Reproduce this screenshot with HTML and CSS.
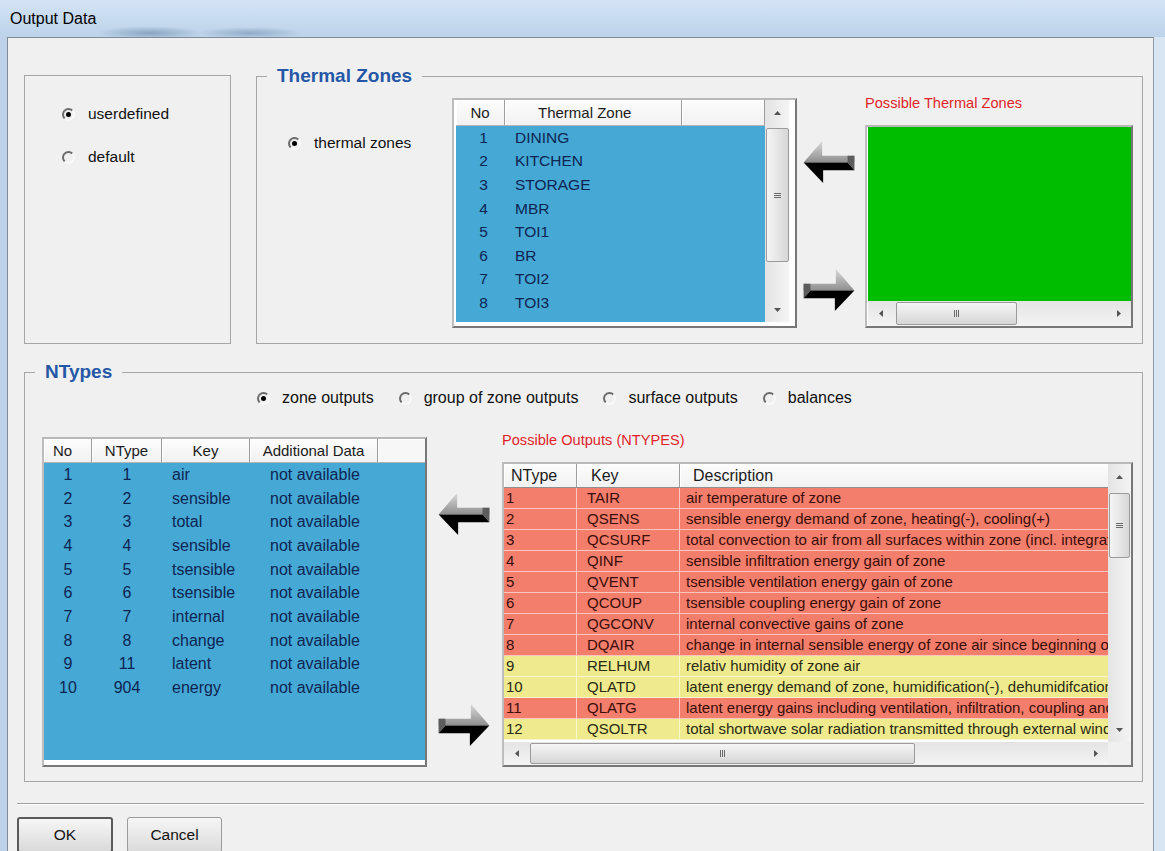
FILE: index.html
```html
<!DOCTYPE html>
<html lang="en">
<head>
<meta charset="utf-8">
<title>Output Data</title>
<link rel="stylesheet" href="styles.css">
</head>
<body>
<svg class="defs" aria-hidden="true">
  <defs>
    <linearGradient id="arrowFace" x1="0" y1="0" x2="0" y2="1">
      <stop offset="0" stop-color="#dadada"/>
      <stop offset="1" stop-color="#8e8e8e"/>
    </linearGradient>
    <symbol id="arrow-left" viewBox="0 0 52 44">
      <polygon points="0,23 19,1 19,16 52,16 52,23" fill="url(#arrowFace)"/>
      <polygon points="45,16 52,16 52,31 45,23" fill="#5c5c5c"/>
      <polygon points="0,23 45,23 52,31 20,31 20,44" fill="#000"/>
    </symbol>
    <symbol id="tri-up" viewBox="0 0 7 4"><polygon points="0,4 3.5,0 7,4"/></symbol>
    <symbol id="tri-down" viewBox="0 0 7 4"><polygon points="0,0 7,0 3.5,4"/></symbol>
    <symbol id="tri-left" viewBox="0 0 4 7"><polygon points="4,0 4,7 0,3.5"/></symbol>
    <symbol id="tri-right" viewBox="0 0 4 7"><polygon points="0,0 4,3.5 0,7"/></symbol>
  </defs>
</svg>

<div class="window">
  <div class="titlebar">Output Data</div>

  <div class="client">
    <div class="top-row">
      <fieldset class="group mode-group">
        <div class="radio-item"><span class="radio on"></span>userdefined</div>
        <div class="radio-item"><span class="radio"></span>default</div>
      </fieldset>

      <fieldset class="group zones-group">
        <legend>Thermal Zones</legend>
        <div class="zones-body">
          <div class="radio-item zones-radio"><span class="radio on"></span>thermal zones</div>

          <div class="frame zone-list">
            <div class="list-main">
              <div class="list-head zone-cols">
                <span class="hcell hc-center">No</span>
                <span class="hcell hc-zone">Thermal Zone</span>
                <span class="hcell"></span>
              </div>
              <div class="list-body blue zone-body">
                <div class="zone-row zone-cols"><span class="num">1</span><span class="txt">DINING</span></div>
                <div class="zone-row zone-cols"><span class="num">2</span><span class="txt">KITCHEN</span></div>
                <div class="zone-row zone-cols"><span class="num">3</span><span class="txt">STORAGE</span></div>
                <div class="zone-row zone-cols"><span class="num">4</span><span class="txt">MBR</span></div>
                <div class="zone-row zone-cols"><span class="num">5</span><span class="txt">TOI1</span></div>
                <div class="zone-row zone-cols"><span class="num">6</span><span class="txt">BR</span></div>
                <div class="zone-row zone-cols"><span class="num">7</span><span class="txt">TOI2</span></div>
                <div class="zone-row zone-cols"><span class="num">8</span><span class="txt">TOI3</span></div>
                <div class="zone-row zone-cols"><span class="num">9</span><span class="txt">STAIR</span></div>
              </div>
            </div>
            <div class="vscroll zone-vscroll">
              <div class="sb-btn"><svg class="tri-v"><use href="#tri-up"/></svg></div>
              <div class="thumb-v zone-thumb"><span class="grip-v"></span></div>
              <div class="sb-track"></div>
              <div class="sb-btn"><svg class="tri-v"><use href="#tri-down"/></svg></div>
            </div>
          </div>

          <div class="arrows zone-arrows">
            <svg class="arrow"><use href="#arrow-left"/></svg>
            <svg class="arrow flip"><use href="#arrow-left"/></svg>
          </div>

          <div class="possible zone-possible">
            <div class="caption">Possible Thermal Zones</div>
            <div class="frame green-list">
              <div class="green-fill"></div>
              <div class="hscroll">
                <div class="sb-btn-h"><svg class="tri-h"><use href="#tri-left"/></svg></div>
                <div class="thumb-h green-thumb"><span class="grip-h"></span></div>
                <div class="sb-track"></div>
                <div class="sb-btn-h"><svg class="tri-h"><use href="#tri-right"/></svg></div>
              </div>
            </div>
          </div>
        </div>
      </fieldset>
    </div>

    <fieldset class="group ntypes-group">
      <legend>NTypes</legend>
      <div class="type-radios">
        <div class="radio-item"><span class="radio on"></span>zone outputs</div>
        <div class="radio-item"><span class="radio"></span>group of zone outputs</div>
        <div class="radio-item"><span class="radio"></span>surface outputs</div>
        <div class="radio-item"><span class="radio"></span>balances</div>
      </div>

      <div class="ntypes-body">
        <div class="frame selected-list">
          <div class="list-head sel-cols">
            <span class="hcell hc-no">No</span>
            <span class="hcell hc-center">NType</span>
            <span class="hcell hc-center">Key</span>
            <span class="hcell hc-center">Additional Data</span>
            <span class="hcell hc-fill"></span>
          </div>
          <div class="list-body blue sel-body">
            <div class="sel-row sel-cols"><span class="c">1</span><span class="c">1</span><span class="k">air</span><span class="d">not available</span></div>
            <div class="sel-row sel-cols"><span class="c">2</span><span class="c">2</span><span class="k">sensible</span><span class="d">not available</span></div>
            <div class="sel-row sel-cols"><span class="c">3</span><span class="c">3</span><span class="k">total</span><span class="d">not available</span></div>
            <div class="sel-row sel-cols"><span class="c">4</span><span class="c">4</span><span class="k">sensible</span><span class="d">not available</span></div>
            <div class="sel-row sel-cols"><span class="c">5</span><span class="c">5</span><span class="k">tsensible</span><span class="d">not available</span></div>
            <div class="sel-row sel-cols"><span class="c">6</span><span class="c">6</span><span class="k">tsensible</span><span class="d">not available</span></div>
            <div class="sel-row sel-cols"><span class="c">7</span><span class="c">7</span><span class="k">internal</span><span class="d">not available</span></div>
            <div class="sel-row sel-cols"><span class="c">8</span><span class="c">8</span><span class="k">change</span><span class="d">not available</span></div>
            <div class="sel-row sel-cols"><span class="c">9</span><span class="c">11</span><span class="k">latent</span><span class="d">not available</span></div>
            <div class="sel-row sel-cols"><span class="c">10</span><span class="c">904</span><span class="k">energy</span><span class="d">not available</span></div>
          </div>
        </div>

        <div class="arrows type-arrows">
          <svg class="arrow"><use href="#arrow-left"/></svg>
          <svg class="arrow flip"><use href="#arrow-left"/></svg>
        </div>

        <div class="possible outputs-possible">
          <div class="caption">Possible Outputs (NTYPES)</div>
          <div class="frame outputs-table">
            <div class="out-main">
              <div class="list-head out-cols">
                <span class="hcell hc-ntype">NType</span>
                <span class="hcell hc-key">Key</span>
                <span class="hcell hc-desc">Description</span>
              </div>
              <div class="out-row out-cols red"><span>1</span><span>TAIR</span><span>air temperature of zone</span></div>
              <div class="out-row out-cols red"><span>2</span><span>QSENS</span><span>sensible energy demand of zone, heating(-), cooling(+)</span></div>
              <div class="out-row out-cols red"><span>3</span><span>QCSURF</span><span>total convection to air from all surfaces within zone (incl. integrated active elements)</span></div>
              <div class="out-row out-cols red"><span>4</span><span>QINF</span><span>sensible infiltration energy gain of zone</span></div>
              <div class="out-row out-cols red"><span>5</span><span>QVENT</span><span>tsensible ventilation energy gain of zone</span></div>
              <div class="out-row out-cols red"><span>6</span><span>QCOUP</span><span>tsensible coupling energy gain of zone</span></div>
              <div class="out-row out-cols red"><span>7</span><span>QGCONV</span><span>internal convective gains of zone</span></div>
              <div class="out-row out-cols red"><span>8</span><span>DQAIR</span><span>change in internal sensible energy of zone air since beginning of simulation</span></div>
              <div class="out-row out-cols yellow"><span>9</span><span>RELHUM</span><span>relativ humidity of zone air</span></div>
              <div class="out-row out-cols yellow"><span>10</span><span>QLATD</span><span>latent energy demand of zone, humidification(-), dehumidifcation(+)</span></div>
              <div class="out-row out-cols red"><span>11</span><span>QLATG</span><span>latent energy gains including ventilation, infiltration, coupling and internal gains</span></div>
              <div class="out-row out-cols yellow"><span>12</span><span>QSOLTR</span><span>total shortwave solar radiation transmitted through external windows</span></div>
            </div>
            <div class="vscroll out-vscroll">
              <div class="sb-btn"><svg class="tri-v"><use href="#tri-up"/></svg></div>
              <div class="thumb-v out-thumb"><span class="grip-v"></span></div>
              <div class="sb-track"></div>
              <div class="sb-btn"><svg class="tri-v"><use href="#tri-down"/></svg></div>
            </div>
            <div class="hscroll out-hscroll">
              <div class="sb-btn-h"><svg class="tri-h"><use href="#tri-left"/></svg></div>
              <div class="thumb-h out-hthumb"><span class="grip-h"></span></div>
              <div class="sb-track"></div>
              <div class="sb-btn-h"><svg class="tri-h"><use href="#tri-right"/></svg></div>
            </div>
            <div class="corner"></div>
          </div>
        </div>
      </div>
    </fieldset>

    <div class="separator"></div>

    <div class="buttons">
      <button class="btn default">OK</button>
      <button class="btn">Cancel</button>
    </div>
  </div>
</div>
</body>
</html>
```

FILE: styles.css
```css
* { box-sizing: border-box; }

html, body {
  margin: 0;
  padding: 0;
}

body {
  width: 1165px;
  height: 851px;
  overflow: hidden;
  font-family: "Liberation Sans", Arial, sans-serif;
  font-size: 15.5px;
  color: #111;
  background: #c9dbee;
}

.defs {
  position: absolute;
  width: 0;
  height: 0;
  overflow: hidden;
}

/* ---------- window frame ---------- */
.window {
  width: 1165px;
  height: 851px;
  display: flex;
  flex-direction: column;
  background: linear-gradient(to right, #bdd2e9, #cfe0f2 40%, #d8e6f4);
}

.titlebar {
  flex: none;
  height: 37px;
  display: flex;
  align-items: center;
  padding-left: 10px;
  font-size: 16px;
  color: #000;
  background:
    radial-gradient(ellipse 70px 9px at 150px 33px, rgba(60, 90, 130, .4), transparent 75%),
    radial-gradient(ellipse 70px 8px at 250px 33px, rgba(60, 90, 130, .35), transparent 75%),
    linear-gradient(to bottom, #d3e3f4, #bcd3ea);
}

.client {
  flex: 1;
  margin: 0 11px 0 7px;
  border-top: 1px solid #7f8c99;
  border-left: 1px solid #7f8c99;
  border-right: 1px solid #8d9aa6;
  background: #f0f0f0;
  display: flex;
  flex-direction: column;
}

/* ---------- group boxes ---------- */
.group {
  margin: 0;
  padding: 0;
  min-width: 0;
  border: 1px solid #a6a6a6;
}

.group legend {
  padding: 0 10px;
  font-weight: bold;
  font-size: 19px;
  line-height: 22px;
  color: #2557a7;
}

.top-row {
  display: flex;
  align-items: flex-end;
  gap: 25px;
  margin-top: 27px;
  padding-left: 16px;
}

.mode-group {
  flex: none;
  width: 207px;
  height: 269px;
  padding: 30px 0 0 37px;
  display: flex;
  flex-direction: column;
  gap: 27px;
}

.zones-group {
  flex: none;
  width: 887px;
  padding: 11px 9px 15px 31px;
}

/* the legend sits inside the padding box, so pull it back to 10px from the border */
.zones-group legend { margin-left: -21px; }

.zones-body {
  display: flex;
  align-items: flex-start;
}

/* ---------- radio buttons ---------- */
.radio-item {
  display: flex;
  align-items: center;
  gap: 13px;
  height: 16px;
  white-space: nowrap;
}

.radio {
  flex: none;
  position: relative;
  width: 13px;
  height: 13px;
  border-radius: 50%;
  border: 2px solid;
  border-color: #6a6a6a #f9f9f9 #f9f9f9 #6a6a6a;
  background: #f0f0f0;
}

.radio.on::after {
  content: "";
  position: absolute;
  left: 50%;
  top: 50%;
  width: 5px;
  height: 5px;
  margin: -2.5px 0 0 -2.5px;
  border-radius: 50%;
  background: #000;
}

.zones-radio {
  flex: none;
  width: 164px;
  margin-top: 37px;
}

/* ---------- list frames ---------- */
.frame {
  flex: none;
  border: 2px solid;
  border-color: #b9b9b9 #777 #777 #bdbdbd;
  background: #fff;
}

.list-head {
  display: grid;
  background: linear-gradient(to bottom, #fdfdfd, #f1f1f1);
  border-bottom: 1px solid #b4b4b4;
  color: #1b1b1b;
  font-size: 15px;
}

.hcell {
  display: flex;
  align-items: center;
  border-right: 1px solid #9d9d9d;
  box-shadow: inset 1px 1px 0 #fff;
  white-space: nowrap;
  overflow: hidden;
}

.hc-center { justify-content: center; }

.blue {
  background: #45a8d5;
  color: #0e2552;
}

.list-body { overflow: hidden; }

/* thermal zone list */
.zone-list {
  width: 345px;
  height: 230px;
  display: flex;
  padding: 0 0 4px 2px;
}

.list-main {
  flex: 1;
  min-width: 0;
  display: flex;
  flex-direction: column;
}

.zone-cols {
  display: grid;
  grid-template-columns: 49px 177px 1fr;
}

.zone-list .list-head { height: 26px; }

.hc-zone { padding-left: 33px; }

.zone-body {
  height: 196px;
  font-size: 15.5px;
}

.zone-row {
  height: 23.6px;
  align-items: center;
}

.zone-row .num {
  text-align: center;
  padding-left: 6px;
}

.zone-row .txt {
  padding-left: 10px;
}

/* scroll bars */
.vscroll {
  flex: none;
  display: flex;
  flex-direction: column;
  background: linear-gradient(to right, #e4e4e4, #f4f4f4);
}

.zone-vscroll {
  width: 30px;
  padding-right: 5px;
  background: linear-gradient(to right, #e4e4e4, #f4f4f4 80%, #fff 83%);
}

.sb-btn {
  flex: none;
  height: 25px;
  display: flex;
  align-items: center;
  justify-content: center;
}

.tri-v {
  width: 7px;
  height: 4px;
  fill: #555;
}

.tri-h {
  width: 4px;
  height: 7px;
  fill: #555;
}

.sb-track { flex: 1; }

.thumb-v {
  flex: none;
  margin: 3px 1px 0 1px;
  border: 1px solid #9b9b9b;
  border-radius: 2px;
  background: linear-gradient(to right, #f5f5f5, #e6e6e6 50%, #d6d6d6);
  display: flex;
  align-items: center;
  justify-content: center;
}

.zone-thumb { height: 134px; }

.grip-v {
  width: 7px;
  height: 5px;
  background: repeating-linear-gradient(to bottom, #6a6a6a 0 1px, transparent 1px 2px);
}

.hscroll {
  display: flex;
  height: 25px;
  background: linear-gradient(to bottom, #e4e4e4, #f4f4f4);
}

.sb-btn-h {
  flex: none;
  width: 25px;
  display: flex;
  align-items: center;
  justify-content: center;
}

.thumb-h {
  flex: none;
  margin: 1px 0;
  border: 1px solid #9b9b9b;
  border-radius: 2px;
  background: linear-gradient(to bottom, #f5f5f5, #e6e6e6 50%, #d6d6d6);
  display: flex;
  align-items: center;
  justify-content: center;
}

.grip-h {
  width: 5px;
  height: 7px;
  background: repeating-linear-gradient(to right, #6a6a6a 0 1px, transparent 1px 2px);
}

/* arrows between lists */
.arrows {
  flex: none;
  display: flex;
  flex-direction: column;
}

.arrow {
  width: 52px;
  height: 43px;
}

.arrow.flip { transform: scaleX(-1); }

.zone-arrows {
  width: 68px;
  padding: 42px 0 0 6px;
  gap: 85px;
}

/* possible thermal zones */
.possible {
  flex: none;
  display: flex;
  flex-direction: column;
}

.caption {
  color: #e01f2b;
  font-size: 14.6px;
  line-height: 18px;
  white-space: nowrap;
}

.zone-possible {
  width: 268px;
}

.zone-possible .caption {
  margin: -4px 0 13px;
}

.green-list {
  height: 203px;
  display: flex;
  flex-direction: column;
  padding: 0 0 0 1px;
}

.green-fill {
  flex: 1;
  background: #00bd00;
}

.green-list .hscroll {
  flex: none;
}

.green-thumb {
  width: 121px;
  margin-left: 3px;
}

/* ---------- NTypes ---------- */
.ntypes-group {
  flex: none;
  width: 1119px;
  margin: 17px 0 0 16px;
  padding: 7px 9px 14px 17px;
}

.ntypes-group legend { margin-left: -7px; }

.type-radios {
  display: flex;
  gap: 25px;
  padding-left: 215px;
  font-size: 16px;
}

.type-radios .radio-item { gap: 12px; }

.ntypes-body {
  display: flex;
  margin-top: 31px;
  height: 330px;
}

.selected-list {
  width: 385px;
  height: 330px;
  display: flex;
  flex-direction: column;
  padding-bottom: 5px;
}

.sel-cols {
  display: grid;
  grid-template-columns: 48px 70px 88px 128px 1fr;
}

.selected-list .list-head { height: 24px; }

.hc-no { padding-left: 9px; }

.hc-fill {
  border-right: none;
  background: #f7f7f7;
}

.sel-body {
  flex: 1;
  font-size: 16px;
}

.sel-row {
  height: 23.7px;
  align-items: center;
}

.sel-row .c { text-align: center; }
.sel-row .k { padding-left: 10px; }
.sel-row .d { padding-left: 20px; white-space: nowrap; }

.type-arrows {
  width: 73px;
  padding: 55px 0 0 11px;
  gap: 168px;
}

.outputs-possible {
  width: 633px;
}

.outputs-possible .caption {
  margin: -6px 0 13px 2px;
}

.outputs-table {
  margin-left: 2px;
  height: 305px;
  display: grid;
  grid-template-columns: 1fr 23px;
  grid-template-rows: 1fr 23px;
}

.out-main {
  min-width: 0;
  overflow: hidden;
}

.out-cols {
  display: grid;
  grid-template-columns: 73px 103px 1fr;
}

.out-main .list-head {
  height: 24px;
  font-size: 16px;
  border-bottom: 1px solid #8f8f8f;
}

.hc-ntype { padding-left: 7px; }
.hc-key { padding-left: 14px; }
.hc-desc { padding-left: 13px; border-right: none; }

.out-row {
  height: 21px;
  font-size: 15px;
  line-height: 20px;
  border-bottom: 1px solid rgba(255, 255, 255, .55);
}

.out-row span {
  white-space: nowrap;
  overflow: hidden;
  border-right: 1px solid rgba(255, 255, 255, .6);
}

.out-row span:nth-child(1) { padding-left: 2px; }
.out-row span:nth-child(2) { padding-left: 10px; }
.out-row span:nth-child(3) { padding-left: 6px; border-right: none; }

.out-row.red {
  background: #f37e6c;
  color: #3b0d08;
}

.out-row.yellow {
  background: #eeea8d;
  color: #2a2a12;
}

.out-vscroll {
  grid-row: 1;
  grid-column: 2;
}

.out-thumb {
  height: 65px;
  margin-top: 4px;
}

.out-hscroll {
  grid-row: 2;
  grid-column: 1;
  height: 23px;
}

.out-hthumb {
  width: 385px;
  margin-left: 1px;
}

.corner {
  grid-row: 2;
  grid-column: 2;
  background: #f0f0f0;
}

/* ---------- bottom buttons ---------- */
.separator {
  flex: none;
  height: 2px;
  margin: 21px 9px 0 9px;
  border-top: 1px solid #a0a0a0;
  border-bottom: 1px solid #fff;
}

.buttons {
  display: flex;
  gap: 14px;
  margin: 12px 0 0 9px;
}

.btn {
  width: 95px;
  height: 36px;
  padding: 0;
  font-family: "Liberation Sans", Arial, sans-serif;
  font-size: 15.5px;
  color: #111;
  border: 1px solid #9a9a9a;
  border-radius: 3px;
  background: linear-gradient(to bottom, #f6f6f6, #e8e8e8 50%, #dadada);
}

.btn.default {
  width: 96px;
  border: 2px solid #5a5a5a;
}
```
